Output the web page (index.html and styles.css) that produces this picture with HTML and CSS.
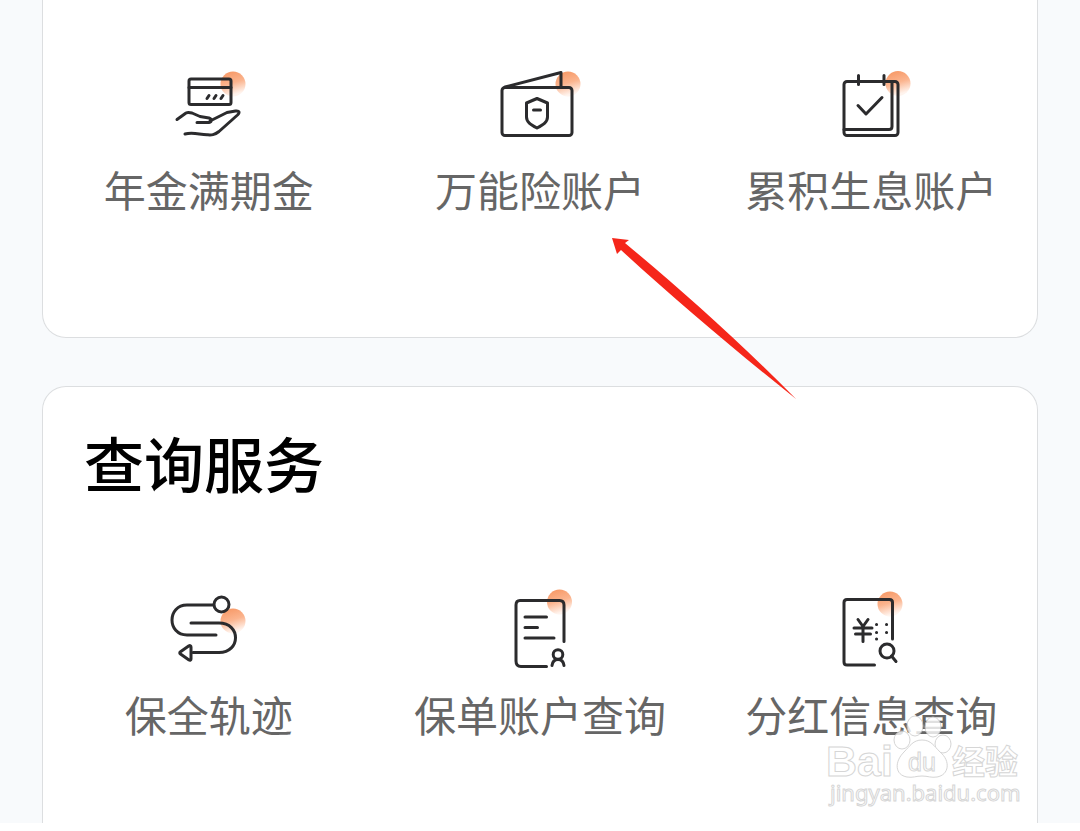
FILE: index.html
```
<!DOCTYPE html>
<html lang="zh-CN">
  <head>
    <meta charset="utf-8" />
    <meta name="viewport" content="width=device-width, initial-scale=1" />
    <title>查询服务</title>
    <link rel="stylesheet" href="styles.css">
  </head>
  <body>
    <svg class="defs" aria-hidden="true">
      <defs>
        <linearGradient id="dot" x1="0" y1="0" x2="0.3" y2="1">
          <stop offset="0.1" stop-color="#f79a68" />
          <stop offset="0.55" stop-color="#fbb48e" />
          <stop offset="1" stop-color="#fff4ee" />
        </linearGradient>
      </defs>
    </svg>

    <main class="screen">
      <section class="card card-top">
        <div class="services">
          <a class="service" href="#annuity">
            <svg class="icon" viewBox="-1 0 100 100" aria-hidden="true">
              <circle class="dot" cx="73" cy="24" r="12.5" />
              <rect x="29" y="19" width="42" height="25.5" rx="2" />
              <path d="M29 27.5H71M47 38.500l2-3M54 38.500l2-3M61 38.500l2-3" />
              <path d="M17 59.500L26 53c2-1 4-.5 6 0l8 3.500 9 1.500c3 1 3 4 0 4.500H37M50 61l17-8.500 8.500-1.500c4-.5 4.500 1.500 2 4L59 71.500c-5 4-8 3.500-12 3.300-8-.3-14-3-22-.8" />
            </svg>
            <span class="label">年金满期金</span>
          </a>
          <a class="service" href="#universal">
            <svg class="icon" viewBox="0 0 100 100" aria-hidden="true">
              <circle class="dot" cx="78" cy="24" r="12.5" />
              <rect x="12" y="27.5" width="70" height="48" rx="3" />
              <path d="M15 27L71 12.500V27" />
              <path d="M47 38.500l10.500 4.500v14c0 5-4 7.500-10.500 11-6.500-3.500-10.500-6-10.500-11V43z" />
              <path d="M43.500 50h7" />
            </svg>
            <span class="label">万能险账户</span>
          </a>
          <a class="service" href="#interest">
            <svg class="icon" viewBox="-9 0 100 100" aria-hidden="true">
              <circle class="dot" cx="68" cy="23.500" r="12.5" />
              <rect x="14" y="21.500" width="54" height="54" rx="3" />
              <path d="M14 69.500H59c2 0 3-1 3-3V22M28.500 15.500v9M54 15.500v9M28 45.500l8 8.500 16-16.500" />
            </svg>
            <span class="label">累积生息账户</span>
          </a>
        </div>
      </section>

      <section class="card card-query">
        <h2 class="title">查询服务</h2>
        <div class="services">
          <a class="service" href="#track">
            <svg class="icon" viewBox="-1 5 100 100" aria-hidden="true">
              <circle class="dot" cx="73" cy="41" r="12.5" />
              <path d="M53 25H27c-20 0-20 30 0 30h29M31 43h28c22 0 22 29.500 0 29.500H33" />
              <circle class="paper" cx="61.500" cy="24.500" r="7.5" />
              <path d="M31 67v12c0 1-1 1.500-2 1l-8.500-6c-1-.7-1-1.500 0-2.200l8.500-6c1-.5 2 0 2 1.200z" />
            </svg>
            <span class="label">保全轨迹</span>
          </a>
          <a class="service" href="#account">
            <svg class="icon" viewBox="-10 5 100 100" aria-hidden="true">
              <circle class="dot" cx="59.500" cy="22" r="12.5" />
              <path d="M64 61.500V25c0-3-1.500-4.500-4.500-4.500H20c-3 0-4 1.500-4 4.500v56c0 4 2 5.500 5 5.500h25.500" />
              <path d="M25 37h21.500M25 47.500h12.500M25 58h29" />
              <circle cx="58" cy="74.500" r="4.8" />
              <path d="M52 85.500c.5-4 2.500-6 6-6s5.500 2 6 6" />
            </svg>
            <span class="label">保单账户查询</span>
          </a>
          <a class="service" href="#dividend">
            <svg class="icon" viewBox="-9 5 100 100" aria-hidden="true">
              <circle class="dot" cx="60" cy="24" r="12.5" />
              <path d="M62.500 59V22.500c0-2-1-3-3-3H17c-2 0-3 1-3 3V82c0 2 1 3 3 3h27.500" />
              <path d="M28 39.500l5 7 5-7M33 46.500v15M24 48h18M25.500 54h15" />
              <path d="M46.500 44.500h.1M56.500 44.500h.1M46.500 52.500h.1M56.500 52.500h.1M46.500 59h.1" />
              <circle cx="57" cy="71" r="7" />
              <path d="M61.500 76l4.500 5.500" />
            </svg>
            <span class="label">分红信息查询</span>
          </a>
        </div>
      </section>

      <svg class="pointer" viewBox="0 0 184 161" aria-hidden="true">
        <path d="M0 0l17 2-4 3C66 49 128 104 184 161 124 113 62 61 9 12l-4 4z" />
      </svg>

      <svg class="watermark" viewBox="0 0 204 104" role="img" aria-label="Baidu 经验">
        <ellipse cx="80" cy="31" rx="8" ry="9" />
        <ellipse cx="93" cy="17" rx="8" ry="10" />
        <ellipse cx="111" cy="18" rx="8" ry="10" />
        <ellipse cx="121" cy="35" rx="8" ry="9" />
        <path d="M100 31c9 0 12 6 18 12 11 9 9 23-3 25-6 1-9-1-15-1s-9 2-15 1c-12-2-13-15-3-25 6-6 9-12 18-12z" />
        <text class="brand" x="4" y="67">Bai</text>
        <text class="du" x="86" y="62">du</text>
        <text class="brand-cn" x="130" y="65">经验</text>
        <text class="site" x="8" y="92">jingyan.baidu.com</text>
      </svg>
    </main>
  </body>
</html>
```

FILE: styles.css
```
* {
  box-sizing: border-box;
}

body {
  margin: 0;
  background: #fff;
  font-family: "Noto Sans CJK SC", sans-serif;
}

.defs {
  position: absolute;
  width: 0;
  height: 0;
}

.screen {
  position: relative;
  padding: 0 42px;
  background: #f8fafc;
  overflow: hidden;
}

.card {
  background: #fff;
  border: 1px solid #dcdee0;
}

.card-top {
  padding: 60px 0 119px;
  border-top: 0;
  border-radius: 0 0 24px 24px;
}

.card-query {
  margin-top: 48px;
  padding: 30px 0 80px;
  border-bottom: 0;
  border-radius: 24px 24px 0 0;
}

.title {
  margin: 0 0 78px;
  padding-left: 41px;
  color: #000;
  font-size: 60px;
  font-weight: 500;
  line-height: 90px;
}

.services {
  display: grid;
  grid-template-columns: repeat(3, 1fr);
}

.service {
  display: flex;
  flex-direction: column;
  align-items: center;
  text-decoration: none;
}

.label {
  color: #666;
  font-size: 42px;
  line-height: 58px;
  white-space: nowrap;
}

.icon {
  width: 100px;
  height: 100px;
  fill: none;
  stroke: #2b2b2d;
  stroke-width: 3;
  stroke-linecap: round;
  stroke-linejoin: round;
}

.icon .dot {
  fill: url(#dot);
  stroke: none;
}

.icon .paper {
  fill: #fff;
}

/* hint arrow lying over both cards */
.pointer {
  position: absolute;
  top: 238px;
  left: 612px;
  width: 184px;
  height: 161px;
  fill: #f5261a;
}

.watermark {
  position: absolute;
  right: 54px;
  bottom: 10px;
  width: 204px;
  height: 104px;
  fill: #fff;
  stroke: #ccc;
  stroke-width: 1;
  opacity: 0.8;
}

.brand {
  font: bold 43px "Liberation Sans", sans-serif;
}

.du {
  font: 25px "Liberation Sans", sans-serif;
}

.brand-cn {
  font: bold 33px "Noto Sans CJK SC", sans-serif;
}

.site {
  font: 22px "Noto Sans", sans-serif;
}
```
